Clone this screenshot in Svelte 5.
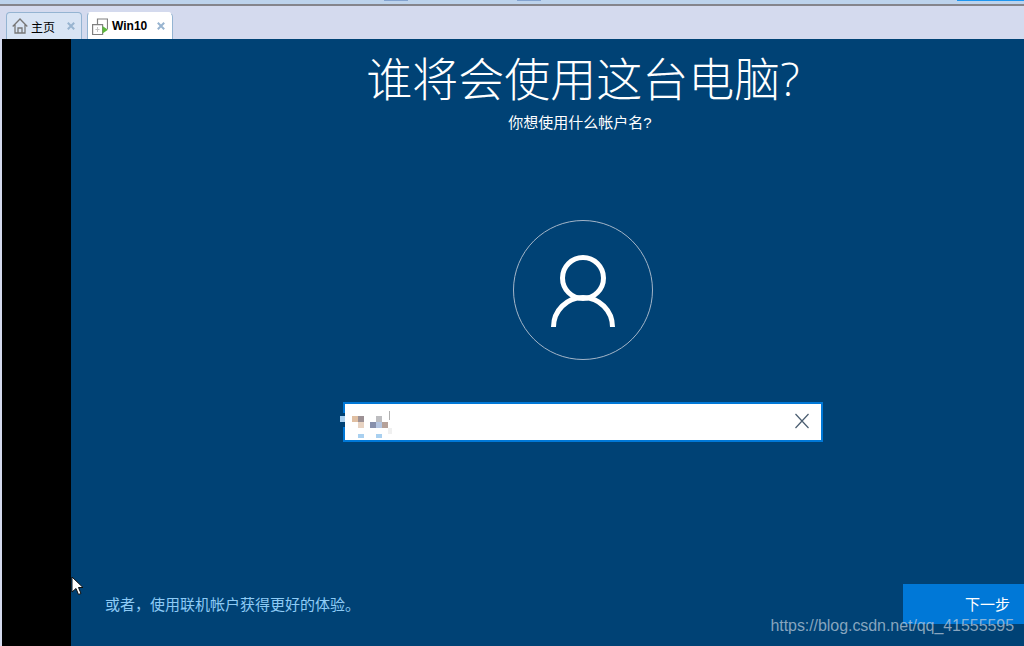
<script>
	let name = '';
	const blurPixels = [
		{ x: 352, y: 416, w: 6, h: 6, c: '#e0bfa2' },
		{ x: 358, y: 416, w: 6, h: 6, c: '#9c9094' },
		{ x: 358, y: 422, w: 6, h: 6, c: '#e8d3c2' },
		{ x: 376, y: 416, w: 6, h: 6, c: '#bdbdc0' },
		{ x: 370, y: 422, w: 6, h: 6, c: '#8790ab' },
		{ x: 376, y: 422, w: 6, h: 6, c: '#b4c5e0' },
		{ x: 382, y: 422, w: 6, h: 6, c: '#b5a199' },
		{ x: 388, y: 428, w: 4, h: 6, c: '#f0f0f0' },
		{ x: 358, y: 434, w: 6, h: 4, c: '#a9d0f0' },
		{ x: 376, y: 434, w: 6, h: 4, c: '#a9d0f0' }
	];
</script>

<div class="app">
	<div class="topstrip">
		<span class="mark m1"></span>
		<span class="mark m2"></span>
		<span class="mark m3"></span>
	</div>
	<div class="tabbar">
		<div class="tab">
			<svg class="home" width="16" height="16" viewBox="0 0 16 16">
				<path d="M.7 8.500 8 1l7.300 7.500M3 6.500v8.500h10V6.500M6 15v-5h4v5" fill="none" stroke="#777" stroke-width="1.300" />
			</svg>
			<span class="tab-label">主页</span>
			<svg class="tab-close" width="8" height="8" viewBox="0 0 8 8">
				<path d="M.8.800l6.400 6.400M7.200.800.800 7.200" stroke="#98b4d0" stroke-width="2" fill="none" />
			</svg>
		</div>
		<div class="tab active">
			<svg width="16" height="17" viewBox="0 0 16 17">
				<path d="M5.500 6V1h10v10" fill="none" stroke="#808080" stroke-width="1.200" />
				<path d="M.6 6.600h10v10H.6z" fill="#fff" stroke="#808080" stroke-width="1.200" />
				<path d="M5.500 9v5M3.500 11.500h4" stroke="#c4c4c4" stroke-width="1" fill="none" />
				<path d="M10.500 8l5.500 3.700-5.500 3.800z" fill="#5cb83c" />
			</svg>
			<span class="tab-label bold">Win10</span>
			<svg class="tab-close" width="8" height="8" viewBox="0 0 8 8">
				<path d="M.8.800l6.400 6.400M7.200.800.800 7.200" stroke="#98b4d0" stroke-width="2" fill="none" />
			</svg>
		</div>
	</div>
	<div class="main">
		<div class="black"></div>
		<div class="guest">
			<div class="screen">
				<h1>谁将会使用这台电脑?</h1>
				<p class="sub">你想使用什么帐户名?</p>
				<svg class="avatar" width="140" height="140" viewBox="0 0 140 140">
					<circle cx="70" cy="70" r="69.500" fill="none" stroke="#a3b5c8" stroke-width="1" />
					<circle cx="70" cy="58" r="20.500" fill="none" stroke="#fff" stroke-width="5" />
					<path d="M40.500 107a29.500 29.500 0 0 1 59 0" fill="none" stroke="#fff" stroke-width="5" />
				</svg>
				<div class="inputbox">
					<input type="text" bind:value={name} aria-label="帐户名" />
					<svg class="clear" width="16" height="16" viewBox="0 0 16 16">
						<path d="M1.500 1l13 14M14.500 1l-13 14" stroke="#4a5d70" stroke-width="1.200" fill="none" />
					</svg>
				</div>
			</div>
			<div class="footer">
				<a href="#top" class="link">或者，使用联机帐户获得更好的体验。</a>
				<button class="next">下一步</button>
			</div>
			<span class="watermark">https://blog.csdn.net/qq_41555595</span>
		</div>
		<svg class="cursor" width="14" height="21" viewBox="0 0 14 21">
			<path d="M1 1v15l4-3.500 2.500 6 2.500-1-2.500-6H12z" fill="#fff" stroke="#111" stroke-width="1" />
		</svg>
	</div>
	{#each blurPixels as p}
		<span class="pixel" style="left:{p.x}px;top:{p.y}px;width:{p.w}px;height:{p.h}px;background:{p.c}"></span>
	{/each}
	<span class="gap"></span>
	<span class="nub"></span>
	<span class="caret"></span>
</div>

<style>
	:global(body) {
		margin: 0;
	}

	.app {
		position: relative;
		width: 1024px;
		height: 646px;
		overflow: hidden;
		display: flex;
		flex-direction: column;
		font-family: 'Liberation Sans', 'Noto Sans CJK SC', sans-serif;
		background: #d4daee;
	}

	.topstrip {
		position: relative;
		height: 4px;
		background: #bdd3ec;
		border-bottom: 2px solid #85858c;
		flex: none;
	}

	.mark {
		position: absolute;
		top: 0;
		height: 1px;
		background: #83a3d0;
	}

	.m1 {
		left: 384px;
		width: 24px;
	}

	.m2 {
		left: 517px;
		width: 24px;
	}

	.m3 {
		left: 957px;
		width: 67px;
		background: #1e96f0;
	}

	.tabbar {
		flex: none;
		height: 33px;
		display: flex;
		align-items: flex-end;
		gap: 5px;
		padding-left: 6px;
		box-sizing: border-box;
	}

	.tab {
		display: flex;
		align-items: center;
		box-sizing: border-box;
		height: 27px;
		width: 76px;
		padding: 0 6px 0 5px;
		background: #d8e4f4;
		border: 1px solid #94b4d2;
		border-bottom: none;
		border-radius: 4px 4px 0 0;
		font-size: 12px;
		color: #000;
	}

	.tab svg {
		flex: none;
	}

	.tab.active {
		background: #fff;
		width: 86px;
		border-top-color: #fff;
		border-radius: 4px 5px 0 0;
		padding: 0 7px 0 4px;
	}

	.tab-label {
		margin-left: 3px;
		flex: 1;
	}

	.tab.active .tab-label {
		margin-left: 4px;
	}

	.bold {
		font-weight: bold;
	}

	.main {
		position: relative;
		flex: 1;
		display: flex;
		min-height: 0;
		padding-left: 2px;
	}

	.black {
		width: 69px;
		background: #000;
		flex: none;
	}

	.guest {
		position: relative;
		flex: 1;
		min-width: 0;
		overflow: hidden;
		background: #004275;
		display: flex;
		flex-direction: column;
	}

	.screen {
		width: 1024px;
		display: flex;
		flex-direction: column;
		align-items: center;
		color: #fff;
		flex: 1;
		min-height: 0;
	}

	h1 {
		margin: 7px 0 0;
		font-family: 'Open Sans', 'Noto Sans CJK SC', sans-serif;
		font-size: 46px;
		line-height: 64px;
		font-weight: 300;
	}

	.sub {
		margin: 3px 0 0;
		padding-right: 6px;
		font-size: 15px;
		line-height: 20px;
	}

	.avatar {
		margin-top: 87px;
		flex: none;
	}

	.inputbox {
		margin-top: 42px;
		width: 480px;
		height: 40px;
		box-sizing: border-box;
		border: 2px solid #0078d7;
		background: #fff;
		display: flex;
		align-items: center;
		padding: 0 11px 0 6px;
	}

	input {
		flex: 1;
		min-width: 0;
		border: none;
		outline: none;
		background: transparent;
		font-size: 15px;
	}

	.clear {
		flex: none;
		margin-top: -3px;
	}

	.footer {
		flex: none;
		display: flex;
		justify-content: space-between;
		align-items: center;
		height: 40px;
		margin-bottom: 22px;
		padding-left: 34px;
	}

	.link {
		color: #8ecbf5;
		font-size: 15px;
		text-decoration: none;
		padding-bottom: 2px;
	}

	.next {
		width: 121px;
		height: 40px;
		border: none;
		background: #0078d7;
		color: #fff;
		font-family: inherit;
		font-size: 15px;
		text-align: right;
		padding: 0 14px 2px 0;
	}

	.watermark {
		position: absolute;
		right: 10px;
		bottom: 11px;
		font-size: 16px;
		letter-spacing: -0.06px;
		color: rgba(190, 205, 220, 0.72);
		white-space: nowrap;
	}

	.cursor {
		position: absolute;
		left: 71px;
		top: 537px;
	}

	.pixel {
		position: absolute;
	}

	.gap {
		position: absolute;
		left: 343px;
		top: 413px;
		width: 2px;
		height: 14px;
		background: #004275;
	}

	.nub {
		position: absolute;
		left: 340px;
		top: 416px;
		width: 5px;
		height: 6px;
		background: #a9d0f0;
	}

	.caret {
		position: absolute;
		left: 389px;
		top: 411px;
		width: 1px;
		height: 9px;
		background: #b0b0b0;
	}
</style>
